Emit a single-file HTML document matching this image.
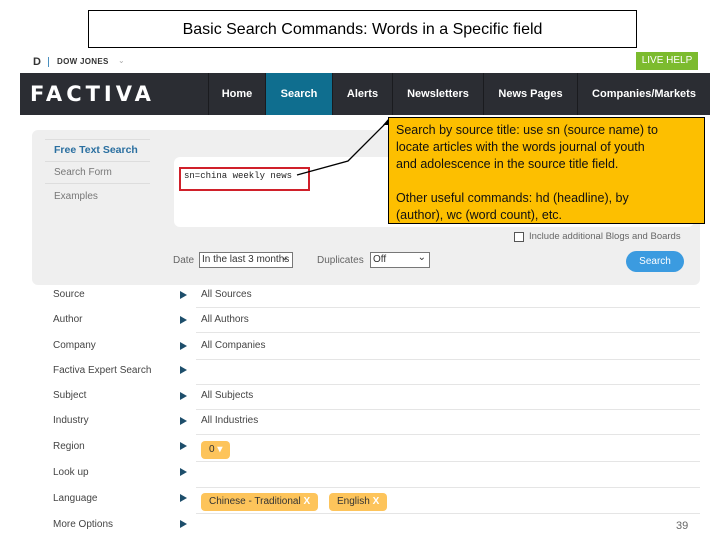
<!DOCTYPE html>
<html><head><meta charset="utf-8"><style>
*{margin:0;padding:0;box-sizing:border-box}
body{width:720px;height:540px;background:#fff;position:relative;overflow:hidden;font-family:"Liberation Sans",Arial,sans-serif}
.a{position:absolute}
.title{left:88px;top:10px;width:549px;height:38px;border:1px solid #000;font-size:16px;text-align:center;line-height:38px}
.nav{left:20px;top:73px;width:690px;height:42px;background:#2b2d33}
.ni{position:absolute;top:0;height:42px;line-height:42px;color:#fff;font-size:11px;font-weight:bold;text-align:center;border-left:1px solid #1a1b1f}
.lab{position:absolute;left:53px;font-size:10px;color:#444}
.tri{position:absolute;left:180px;width:0;height:0;border-left:7px solid #1d4e6b;border-top:4px solid transparent;border-bottom:4px solid transparent}
.val{position:absolute;left:201px;font-size:10px;color:#444}
.sep{position:absolute;left:196px;width:504px;height:1px;background:#e5e5e5}
.chip{position:absolute;background:#fdc45b;border-radius:4px;font-size:10px;color:#333;line-height:18px;padding:0 8px;white-space:nowrap}
.chip b{color:#fff}
.sel{position:absolute;border:1px solid #777;background:#fff;font-size:10px;color:#333;height:16px;line-height:14px;padding-left:2px;white-space:nowrap;overflow:hidden}
.sel span{position:absolute;right:3px;top:-2px}
</style></head><body>
<div class="a title">Basic Search Commands: Words in a Specific field</div>
<div class="a" style="left:33px;top:56px;font-size:11px;font-weight:bold;color:#333">D</div>
<div class="a" style="left:48px;top:57px;width:1px;height:10px;background:#4a90c0"></div>
<div class="a" style="left:57px;top:57px;font-size:8px;font-weight:bold;color:#333;letter-spacing:.3px">DOW JONES</div>
<div class="a" style="left:118px;top:56px;font-size:8px;color:#aaa">&#8964;</div>
<div class="a" style="left:636px;top:52px;width:62px;height:18px;background:#7cbb2e;color:#fff;font-size:10px;text-align:center;line-height:18px">LIVE HELP</div>
<div class="a nav">
<div class="a" style="left:10px;top:9px;color:#fff;font-size:21px;font-weight:bold;letter-spacing:4px;font-family:'DejaVu Sans',sans-serif">FACTIVA</div>
<div class="ni" style="left:188px;width:57px">Home</div>
<div class="ni" style="left:245px;width:67px;background:#0f6e8f">Search</div>
<div class="ni" style="left:312px;width:60px">Alerts</div>
<div class="ni" style="left:372px;width:91px">Newsletters</div>
<div class="ni" style="left:463px;width:94px">News Pages</div>
<div class="ni" style="left:557px;width:133px">Companies/Markets</div>
</div>
<div class="a" style="left:32px;top:130px;width:668px;height:155px;background:#efefef;border-radius:6px"></div>
<div class="a" style="left:45px;top:139px;width:105px;height:1px;background:#ddd"></div>
<div class="a" style="left:54px;top:144px;font-size:10.5px;font-weight:bold;color:#2a6fa0">Free Text Search</div>
<div class="a" style="left:45px;top:161px;width:105px;height:1px;background:#ddd"></div>
<div class="a" style="left:54px;top:167px;font-size:10px;color:#777">Search Form</div>
<div class="a" style="left:45px;top:183px;width:105px;height:1px;background:#ddd"></div>
<div class="a" style="left:54px;top:191px;font-size:10px;color:#777">Examples</div>
<div class="a" style="left:174px;top:157px;width:520px;height:70px;background:#fff;border-radius:6px"></div>
<div class="a" style="left:179px;top:167px;width:131px;height:24px;border:2px solid #d0202a"></div>
<div class="a" style="left:184px;top:171px;font-size:9px;font-family:'Liberation Mono',monospace;color:#222">sn=china weekly news</div>
<svg class="a" style="left:0;top:0" width="720" height="540"><polyline points="297,175 348,161 388,121" fill="none" stroke="#000" stroke-width="1.3"/><polygon points="389,118 383,125 390,125" fill="#000"/></svg>
<div class="a" style="left:388px;top:117px;width:317px;height:107px;background:#fdbf00;border:1px solid #000;font-size:12.5px;line-height:17px;padding:4px 7px;color:#111;white-space:nowrap">Search by source title: use sn (source name) to<br>locate articles with the words journal of youth<br>and adolescence in the source title field.<br><br>Other useful commands: hd (headline), by<br>(author), wc (word count), etc.</div>
<div class="a" style="left:514px;top:232px;width:10px;height:10px;border:1px solid #555;background:#fff"></div>
<div class="a" style="left:529px;top:231px;font-size:9.5px;color:#666">Include additional Blogs and Boards</div>
<div class="a" style="left:173px;top:255px;font-size:10px;color:#666">Date</div>
<div class="sel" style="left:199px;top:252px;width:94px">In the last 3 months<span>&#8964;</span></div>
<div class="a" style="left:317px;top:255px;font-size:10px;color:#666">Duplicates</div>
<div class="sel" style="left:370px;top:252px;width:60px">Off<span>&#8964;</span></div>
<div class="a" style="left:626px;top:251px;width:58px;height:21px;background:#3b9be0;border-radius:11px;color:#fff;font-size:10px;text-align:center;line-height:21px">Search</div>

<div class="lab" style="top:289px">Source</div><div class="tri" style="top:291px"></div><div class="val" style="top:289px">All Sources</div><div class="sep" style="top:307px"></div>
<div class="lab" style="top:314px">Author</div><div class="tri" style="top:316px"></div><div class="val" style="top:314px">All Authors</div><div class="sep" style="top:332px"></div>
<div class="lab" style="top:340px">Company</div><div class="tri" style="top:342px"></div><div class="val" style="top:340px">All Companies</div><div class="sep" style="top:359px"></div>
<div class="lab" style="top:365px">Factiva Expert Search</div><div class="tri" style="top:366px"></div><div class="sep" style="top:384px"></div>
<div class="lab" style="top:390px">Subject</div><div class="tri" style="top:392px"></div><div class="val" style="top:390px">All Subjects</div><div class="sep" style="top:409px"></div>
<div class="lab" style="top:415px">Industry</div><div class="tri" style="top:417px"></div><div class="val" style="top:415px">All Industries</div><div class="sep" style="top:434px"></div>
<div class="lab" style="top:441px">Region</div><div class="tri" style="top:442px"></div><div class="chip" style="left:201px;top:441px">0 <b>&#9662;</b></div><div class="sep" style="top:461px"></div>
<div class="lab" style="top:467px">Look up</div><div class="tri" style="top:468px"></div><div class="sep" style="top:487px"></div>
<div class="lab" style="top:493px">Language</div><div class="tri" style="top:494px"></div><div class="chip" style="left:201px;top:493px">Chinese - Traditional <b>X</b></div><div class="chip" style="left:329px;top:493px">English <b>X</b></div><div class="sep" style="top:513px"></div>
<div class="lab" style="top:519px">More Options</div><div class="tri" style="top:520px"></div>
<div class="a" style="left:676px;top:520px;font-size:11px;color:#666">39</div>
</body></html>
